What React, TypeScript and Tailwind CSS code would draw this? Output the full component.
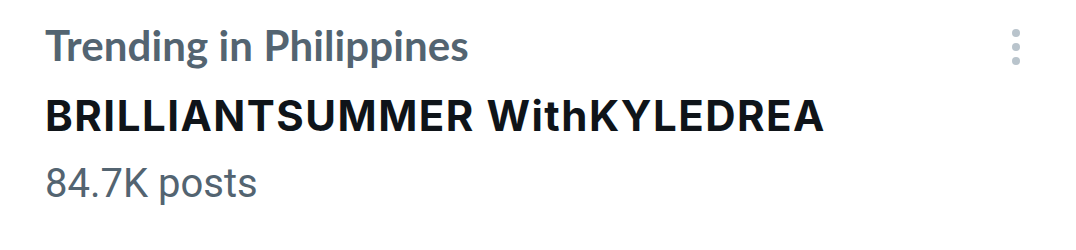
export default function App() {
  return (
    <div className="w-[1076px] h-[250px] bg-white relative">
      <div className="pl-[45px] pt-[20px] flex flex-col">
        <div className="text-[42px] leading-[50px] font-bold tracking-[0.1px] text-[#536471]" style={{ fontFamily: "Lato, sans-serif" }}>
          Trending in Philippines
        </div>
        <div className="mt-[20px] text-[42px] leading-[51px] font-bold tracking-[1.5px] text-[#0f1419]" style={{ fontFamily: "Inter, sans-serif" }}>
          BRILLIANTSUMMER WithKYLEDREA
        </div>
        <div className="mt-[19px] text-[40px] leading-[47px] text-[#536471]" style={{ fontFamily: "Roboto, sans-serif" }}>
          84.7K posts
        </div>
      </div>
      <div className="absolute left-[1012px] top-[29px] flex flex-col gap-[6px]">
        <div className="w-[8px] h-[8px] rounded-full bg-[#b9c4cc]" />
        <div className="w-[8px] h-[8px] rounded-full bg-[#b9c4cc]" />
        <div className="w-[8px] h-[8px] rounded-full bg-[#b9c4cc]" />
      </div>
    </div>
  );
}
